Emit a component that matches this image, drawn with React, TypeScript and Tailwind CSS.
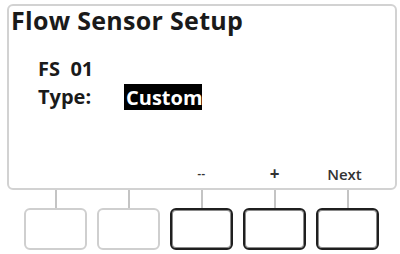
const buttons = [
  { label: "", active: false },
  { label: "", active: false },
  { label: "--", active: true },
  { label: "+", active: true },
  { label: "Next", active: true },
];

const App = () => {
  return (
    <div className="w-[400px] h-[254px] bg-white pt-[4px] font-['Open_Sans',sans-serif] text-[#1a1a1a]">
      {/* LCD screen */}
      <div className="ml-[7px] w-[390px] h-[186px] border-2 border-[#d2d2d2] rounded-[6px] flex flex-col">
        <h1 className="ml-[2px] mt-[1px] text-[25px] leading-[26px] font-bold tracking-[0.3px]">
          Flow Sensor Setup
        </h1>
        <div className="ml-[29px] mt-[24px] text-[20px] leading-[24px] font-bold">FS&nbsp;&nbsp;01</div>
        <div className="ml-[29px] mt-[3px] flex items-center text-[20px] font-bold">
          <span className="w-[86px] leading-[24px]">Type:</span>
          <span className="h-[26px] w-[78px] overflow-hidden whitespace-nowrap bg-black pl-[2px] leading-[28px] text-white">
            Custom
          </span>
        </div>
        {/* soft key labels */}
        <div className="mt-auto mb-[5px] ml-[15px] flex gap-[10px]">
          {buttons.map((b, i) => (
            <div
              key={i}
              className="w-[63px] h-[18px] flex items-end justify-center text-[15px] leading-[18px] font-semibold text-[#333]"
            >
              {b.label === "--" && (
                <span className="mb-[3px] text-[11px] leading-[14px] font-bold tracking-[0.5px]">--</span>
              )}
              {b.label === "+" && <span className="text-[17px] leading-[18px] font-bold">+</span>}
              {b.label === "Next" && <span className="mr-[6px]">Next</span>}
            </div>
          ))}
        </div>
      </div>

      {/* buttons */}
      <div className="ml-[24px] flex gap-[10px]">
        {buttons.map((b, i) => (
          <div key={i} className="w-[63px] flex flex-col items-center">
            <div className="w-[2px] h-[18px] bg-[#c4c4c4]" />
            <div
              className={
                b.active
                  ? "w-[63px] h-[42px] rounded-[6px] border-[2px] border-[#1f1f1f] shadow-[inset_0_0_0_1px_#8a8a8a]"
                  : "w-[63px] h-[42px] rounded-[6px] border-[2px] border-[#cfcfcf]"
              }
            />
          </div>
        ))}
      </div>
    </div>
  );
};

export default App;
